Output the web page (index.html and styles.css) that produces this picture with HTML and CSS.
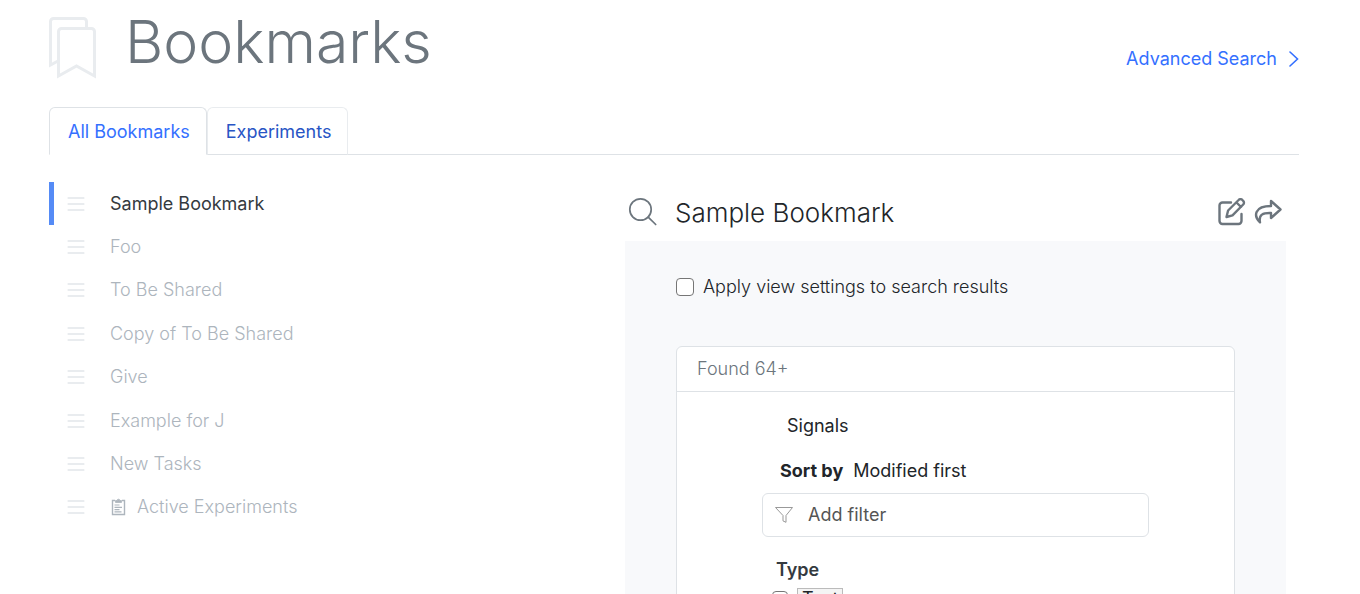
FILE: index.html
```html
<!DOCTYPE html>
<html lang="en">
<head>
<meta charset="utf-8">
<meta name="viewport" content="width=device-width, initial-scale=1">
<title>Bookmarks</title>
<link rel="stylesheet" href="styles.css">
</head>
<body>
<svg class="sprite" width="0" height="0" aria-hidden="true">
  <symbol id="grip" viewBox="0 0 18 16"><path d="M1.500 2h15M1.500 8h15M1.500 14h15" fill="none" stroke="currentColor" stroke-width="2.200" stroke-linecap="round"/></symbol>
</svg>
<div class="page">
  <header class="header">
    <svg class="logo" viewBox="0 0 48 62" fill="none" stroke="currentColor" stroke-width="3" aria-hidden="true">
      <path d="M37.500 11V4.500a3 3 0 0 0-3-3h-30a3 3 0 0 0-3 3V48l7.500-4"/>
      <path d="M9.500 59V14.500a3 3 0 0 1 3-3h30a3 3 0 0 1 3 3V59L27.500 49z"/>
    </svg>
    <h1 class="title">Bookmarks</h1>
    <a class="advanced" href="#">Advanced Search
      <svg class="chevron" viewBox="0 0 10 16" fill="none" stroke="currentColor" stroke-width="1.600" stroke-linecap="round" aria-hidden="true"><path d="M1 1l7.500 7L1 15"/></svg>
    </a>
  </header>
  <nav class="tabs">
    <a class="tab tab-active" href="#" aria-current="page">All Bookmarks</a>
    <a class="tab" href="#">Experiments</a>
  </nav>
  <main class="columns">
    <ul class="list">
      <li class="row row-active"><svg class="grip"><use href="#grip"/></svg><a class="link" href="#">Sample Bookmark</a></li>
      <li class="row"><svg class="grip"><use href="#grip"/></svg><a class="link" href="#">Foo</a></li>
      <li class="row"><svg class="grip"><use href="#grip"/></svg><a class="link" href="#">To Be Shared</a></li>
      <li class="row"><svg class="grip"><use href="#grip"/></svg><a class="link" href="#">Copy of To Be Shared</a></li>
      <li class="row"><svg class="grip"><use href="#grip"/></svg><a class="link" href="#">Give</a></li>
      <li class="row"><svg class="grip"><use href="#grip"/></svg><a class="link" href="#">Example for J</a></li>
      <li class="row"><svg class="grip"><use href="#grip"/></svg><a class="link" href="#">New Tasks</a></li>
      <li class="row"><svg class="grip"><use href="#grip"/></svg><a class="link" href="#"><svg class="clipboard" viewBox="0 0 16 18" fill="none" stroke="currentColor" aria-hidden="true"><path d="M4.500 2.500H2v14h12v-14h-2.500" stroke-width="1.400"/><path d="M5 4.500V2.500h1.700a1.300 1.300 0 0 1 2.600 0H11v2z" fill="currentColor" stroke-width=".8"/><path d="M4 7h5M4 9.300h7.500M4 11.600h5M4 13.900h7" stroke-width="1.200"/></svg>Active Experiments</a></li>
    </ul>
    <section class="detail">
      <div class="detail-head">
        <svg class="search" viewBox="0 0 30 30" fill="none" stroke="currentColor" stroke-width="1.700" stroke-linecap="round" aria-hidden="true"><circle cx="12.500" cy="12.500" r="10.700"/><path d="M20.200 20.200l7.500 7.300"/></svg>
        <h2 class="detail-title">Sample Bookmark</h2>
        <div class="actions">
          <button class="action" type="button" aria-label="Edit"><svg class="action-icon" viewBox="0 0 28 28" fill="none" stroke="currentColor" stroke-width="2.400" stroke-linecap="round" stroke-linejoin="round"><path d="M13 4.500H4.500a3 3 0 0 0-3 3V23a3 3 0 0 0 3 3h16a3 3 0 0 0 3-3v-7"/><path d="M8.500 19l1.600-6.500L20.600 2a2.600 2.600 0 0 1 3.800 0l.8.800a2.600 2.600 0 0 1 0 3.700L14.500 17.300zM18.500 4.500l4.500 4.500"/></svg></button>
          <button class="action" type="button" aria-label="Share"><svg class="action-icon" viewBox="0 0 28 28" fill="none" stroke="currentColor" stroke-width="2.400" stroke-linecap="round" stroke-linejoin="round"><path d="M17 3l9.500 8.500L17 20v-5c-8-.3-12.500 1.500-11 9.300C-.8 18 .5 8 17 8z"/></svg></button>
        </div>
      </div>
      <div class="panel">
        <label class="apply"><input class="check" type="checkbox">Apply view settings to search results</label>
        <div class="card">
          <div class="card-head">Found 64+</div>
          <div class="card-body">
            <div class="signals">Signals</div>
            <div class="sort"><b class="sort-label">Sort by</b>Modified first</div>
            <div class="filter">
              <svg class="funnel" viewBox="0 0 20 18" fill="none" stroke="currentColor" stroke-linejoin="round" aria-hidden="true"><path d="M1.500 1.500h17l-6.500 8v6.800l-3-1.400V9.500z"/></svg>
              <input class="filter-input" type="text" placeholder="Add filter" aria-label="Add filter">
            </div>
            <fieldset class="types">
              <legend class="types-title">Type</legend>
              <label class="type"><input class="check check-small" type="checkbox"><span class="tag">Text</span></label>
            </fieldset>
          </div>
        </div>
      </div>
    </section>
  </main>
</div>
</body>
</html>
```
FILE: styles.css
```css
* { box-sizing: border-box; }
body {
  margin: 0;
  background: #fff;
  color: #212529;
  font: 300 18px/24px Inter, "Liberation Sans", sans-serif;
}
a { color: inherit; text-decoration: none; }
.sprite { display: block; }
.page { padding: 0 61px 0 49px; }

.header { display: flex; align-items: flex-start; height: 107px; }
.logo { width: 48px; height: 62px; margin-top: 17px; color: #e9ecef; }
.title {
  margin: 6px auto 0 28px;
  color: #6c757d;
  font-size: 59px;
  line-height: 72px;
  font-weight: 300;
}
.advanced {
  display: flex;
  align-items: center;
  gap: 12px;
  margin-top: 47px;
  color: #3470ff;
  font-weight: 400;
}
.chevron { width: 10px; height: 16px; }

.tabs { display: flex; border-bottom: 1px solid #dee2e6; }
.tab {
  margin-bottom: -1px;
  padding: 12px 16px 10px 18px;
  border: 1px solid #e9ecef;
  border-bottom-color: #dee2e6;
  border-radius: 6px 6px 0 0;
  color: #2855c5;
  font-weight: 400;
}
.tab-active {
  border-color: #dee2e6;
  border-bottom-color: #fff;
  color: #3470ff;
}

.columns {
  display: grid;
  grid-template-columns: 576fr 674fr;
  align-items: start;
  padding-top: 27px;
}
.list {
  display: grid;
  grid-auto-rows: 1fr;
  min-height: 347px;
  margin: 0;
  padding: 0;
  list-style: none;
  color: #adb5bd;
}
.row {
  display: flex;
  align-items: center;
  gap: 25px;
  padding-left: 13px;
  border-left: 5px solid transparent;
}
.row-active { border-left-color: #558bf6; color: #343a40; font-weight: 400; }
.grip { width: 18px; height: 16px; color: #e9ecef; }
.link { display: flex; align-items: center; gap: 10px; }
.clipboard { width: 17px; height: 18px; }

.detail { padding-right: 13px; }
.detail-head { display: flex; align-items: center; height: 59px; padding: 0 4px 0 3px; }
.search { width: 30px; height: 30px; color: #6c757d; }
.detail-title { margin: 3px auto 0 17px; font-size: 26px; line-height: 36px; font-weight: 300; }
.actions { display: flex; gap: 8px; color: #6c757d; }
.action { display: flex; padding: 0; border: 0; background: none; color: inherit; }
.action-icon { width: 28px; height: 28px; }

.panel { padding: 34px 51px 0; background: #f8f9fb; }
.apply { display: flex; align-items: center; gap: 9px; }
.check {
  appearance: none;
  flex: none;
  width: 18px;
  height: 18px;
  margin: 0;
  border: 1px solid #767676;
  border-radius: 4px;
  background: #fff;
}
.check:checked { background: #3470ff; }
.card {
  margin-top: 47px;
  border: 1px solid #dee2e6;
  border-radius: 6px 6px 0 0;
  background: #fff;
}
.card-head {
  padding: 10px 20px;
  border-bottom: 1px solid #dee2e6;
  color: #6c757d;
}
.card-body { padding: 22px 85px 48px; font-weight: 400; }
.signals { padding-left: 25px; }
.sort { display: flex; gap: 10px; margin-top: 21px; padding-left: 18px; }
.sort-label { font-weight: 700; }
.filter {
  display: flex;
  align-items: center;
  gap: 14px;
  margin-top: 10px;
  padding: 9px 11px;
  border: 1px solid #dee2e6;
  border-radius: 6px;
}
.funnel { width: 20px; height: 18px; color: #999; }
.filter-input {
  flex: 1;
  min-width: 0;
  height: 24px;
  padding: 0;
  border: 0;
  outline: 0;
  background: none;
  font: inherit;
}
.filter-input::placeholder { color: #555; opacity: 1; }
.types { margin: 21px 0 0; padding: 0 0 0 10px; border: 0; }
.types-title { padding: 0 0 0 4px; color: #343a40; font-weight: 600; }
.type { display: flex; align-items: center; gap: 9px; margin-top: 6px; }
.check-small { width: 16px; height: 16px; }
.tag { padding: 0 4px; border: 1px solid #bbb; background: #f4f4f4; line-height: 20px; }
```
